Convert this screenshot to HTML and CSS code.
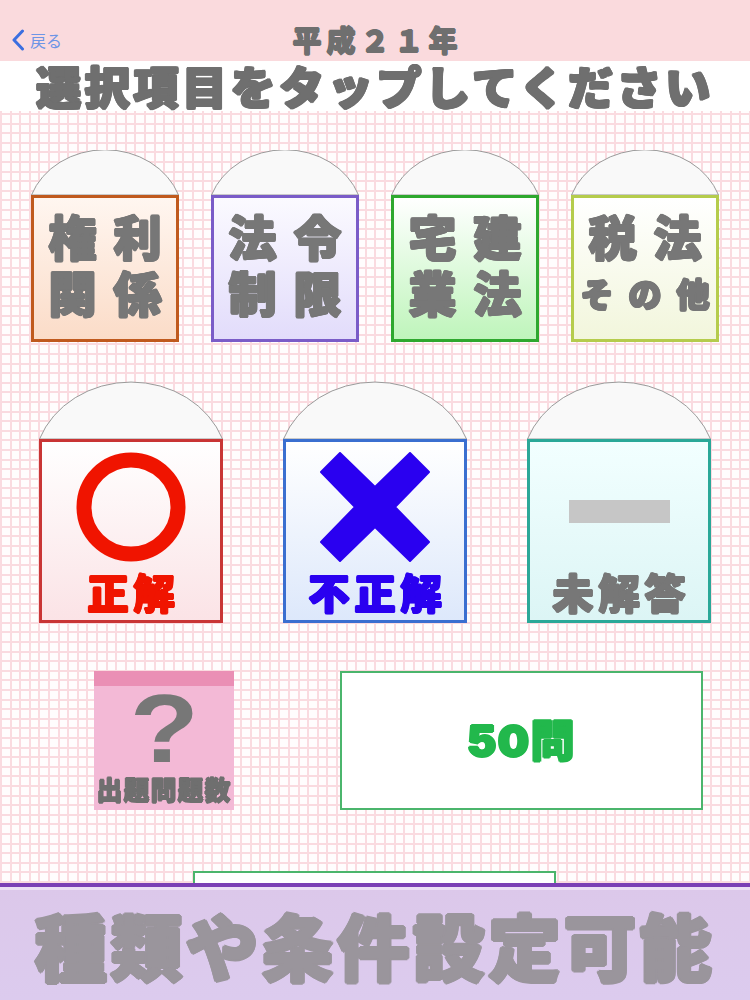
FILE: index.html
```html
<!DOCTYPE html>
<html lang="ja">
<head>
<meta charset="utf-8">
<title>平成21年</title>
<link rel="stylesheet" href="styles.css">
</head>
<body>
<div class="page">
  <header class="topbar">
    <a class="back">
      <svg class="chev" viewBox="0 0 14 22" width="14" height="22"><path d="M11.5 2 L3 11 L11.5 20" fill="none" stroke="#3b6fe0" stroke-width="3" stroke-linecap="round" stroke-linejoin="round"/></svg>
      <span>戻る</span>
    </a>
    <div class="year">平成２１年</div>
  </header>
  <div class="title"><span class="title-text">選択項目をタップしてください</span></div>
  <main class="board">
    <div class="row row-subject">
      <div class="tab tab-s">
        <svg class="dome" viewBox="0 0 148 45" width="148" height="45"><path d="M0.5 45 A78 68 0 0 1 147.5 45 Z"/></svg>
        <div class="box box-s c-orange"><div>権利</div><div>関係</div></div>
      </div>
      <div class="tab tab-s">
        <svg class="dome" viewBox="0 0 148 45" width="148" height="45"><path d="M0.5 45 A78 68 0 0 1 147.5 45 Z"/></svg>
        <div class="box box-s c-purple"><div>法令</div><div>制限</div></div>
      </div>
      <div class="tab tab-s">
        <svg class="dome" viewBox="0 0 148 45" width="148" height="45"><path d="M0.5 45 A78 68 0 0 1 147.5 45 Z"/></svg>
        <div class="box box-s c-green"><div>宅建</div><div>業法</div></div>
      </div>
      <div class="tab tab-s">
        <svg class="dome" viewBox="0 0 148 45" width="148" height="45"><path d="M0.5 45 A78 68 0 0 1 147.5 45 Z"/></svg>
        <div class="box box-s c-olive"><div>税法</div><div class="small">その他</div></div>
      </div>
    </div>
    <div class="row row-answer">
      <div class="tab tab-l">
        <svg class="dome" viewBox="0 0 184 58" width="184" height="58"><path d="M0.5 58 A97.5 87 0 0 1 183.5 58 Z"/></svg>
        <div class="box box-l c-red">
          <div class="mark"><svg viewBox="0 0 110 110" width="110" height="110"><circle cx="55" cy="55" r="47" fill="none" stroke="#f01400" stroke-width="15"/></svg></div>
          <div class="label t-red">正解</div>
        </div>
      </div>
      <div class="tab tab-l">
        <svg class="dome" viewBox="0 0 184 58" width="184" height="58"><path d="M0.5 58 A97.5 87 0 0 1 183.5 58 Z"/></svg>
        <div class="box box-l c-blue">
          <div class="mark"><svg viewBox="0 0 110 110" width="110" height="110"><path d="M1 20 L20 1 L55 35 L90 1 L109 20 L75 55 L109 90 L90 109 L55 75 L20 109 L1 90 L35 55 Z" fill="#2a00f0" stroke="#2a00f0" stroke-width="2" stroke-linejoin="round"/></svg></div>
          <div class="label t-blue">不正解</div>
        </div>
      </div>
      <div class="tab tab-l">
        <svg class="dome" viewBox="0 0 184 58" width="184" height="58"><path d="M0.5 58 A97.5 87 0 0 1 183.5 58 Z"/></svg>
        <div class="box box-l c-teal">
          <div class="mark"><span class="dash"></span></div>
          <div class="label">未解答</div>
        </div>
      </div>
    </div>
    <div class="row row-count">
      <div class="note">
        <div class="note-band"></div>
        <div class="note-q">?</div>
        <div class="note-cap">出題問題数</div>
      </div>
      <div class="count">50問</div>
    </div>
    <div class="next"></div>
  </main>
  <footer class="promo"><span>種類や条件設定可能</span></footer>
</div>
</body>
</html>
```
FILE: styles.css
```css
* { box-sizing: border-box; }
html, body { margin: 0; padding: 0; }
body {
  width: 750px;
  height: 1000px;
  overflow: hidden;
  background: #fff;
  font-family: "Noto Sans CJK JP", "Noto Sans", sans-serif;
}
.page {
  display: flex;
  flex-direction: column;
  width: 750px;
  height: 1000px;
  filter: blur(0.5px);
}

.topbar {
  height: 61px;
  background: #fadadd;
  display: flex;
  align-items: flex-end;
  justify-content: center;
  position: relative;
}
.back {
  position: absolute;
  left: 11px;
  top: 29px;
  display: flex;
  align-items: center;
  gap: 5px;
  color: #6d95e6;
  font-size: 16px;
  line-height: 22px;
}
.year {
  height: 42px;
  line-height: 40px;
  font-size: 29px;
  font-weight: 900;
  letter-spacing: 5px;
  padding-left: 5px;
  color: #6f6f6f;
  text-shadow: 0.8px 0 #6f6f6f, -0.8px 0 #6f6f6f, 0 0.8px #6f6f6f, 0 -0.8px #6f6f6f;
}

.title {
  height: 50px;
  background: #fff;
  display: flex;
  align-items: center;
  justify-content: center;
}
.title-text {
  font-size: 45px;
  line-height: 50px;
  font-weight: 900;
  letter-spacing: 3.6px;
  color: #6f6f6f;
  text-shadow: 1.4px 0 #6f6f6f, -1.4px 0 #6f6f6f, 0 1.4px #6f6f6f, 0 -1.4px #6f6f6f,
    1px 1px #6f6f6f, -1px 1px #6f6f6f, 1px -1px #6f6f6f, -1px -1px #6f6f6f;
  white-space: nowrap;
}

.board {
  height: 772px;
  overflow: hidden;
  padding-top: 39px;
  display: flex;
  flex-direction: column;
  background-color: #fffdfd;
  background-image:
    repeating-linear-gradient(90deg, #fadbe0 0, #fadbe0 2px, transparent 2px, transparent 9.6px),
    repeating-linear-gradient(0deg, #fadbe0 0, #fadbe0 2px, transparent 2px, transparent 9.6px);
}
.row { display: flex; flex: none; }
.row-subject { justify-content: center; gap: 32px; }
.row-answer { justify-content: center; gap: 60px; margin-top: 39px; }
.row-count { margin-top: 48px; padding-left: 94px; gap: 106px; }

.tab { display: flex; flex-direction: column; flex: none; }
.tab-s { width: 148px; }
.tab-l { width: 184px; }
.dome { display: block; flex: none; fill: #f9f9f9; stroke: #9a9a9a; stroke-width: 1; }

.box {
  border: 3px solid;
  color: #777;
  font-weight: 900;
  text-align: center;
  text-shadow: 1.2px 0 currentColor, -1.2px 0 currentColor, 0 1.2px currentColor, 0 -1.2px currentColor,
    0.8px 0.8px currentColor, -0.8px 0.8px currentColor, 0.8px -0.8px currentColor, -0.8px -0.8px currentColor;
}
.box-s {
  height: 147px;
  padding-top: 9px;
  font-size: 48px;
  line-height: 56px;
  letter-spacing: 17px;
  padding-left: 17px;
  white-space: nowrap;
  display: flex;
  flex-direction: column;
  align-items: center;
}
.small {
  font-size: 33px;
  letter-spacing: 15px;
  margin-left: -17px;
  padding-left: 15px;
  padding-top: 2px;
}
.box-l {
  height: 184px;
  padding-top: 10px;
  display: flex;
  flex-direction: column;
  align-items: center;
}
.mark {
  height: 110px;
  display: flex;
  align-items: center;
  justify-content: center;
}
.mark svg { display: block; }
.dash { display: block; width: 101px; height: 23px; margin-top: 8px; background: #c6c6c6; }
.label {
  margin-top: 7px;
  font-size: 41px;
  line-height: 44px;
  letter-spacing: 5px;
  padding-left: 5px;
  white-space: nowrap;
}
.t-red { color: #f01400; }
.t-blue { color: #2a00f0; }

.c-orange { border-color: #c05a1e; background: linear-gradient(#fff6f0, #fbdcc8); }
.c-purple { border-color: #7a5cc8; background: linear-gradient(#fbfaff, #e2dcfb); }
.c-green { border-color: #2ea82e; background: linear-gradient(#fff, #bff5bb); }
.c-olive { border-color: #b5cc4c; background: linear-gradient(#fff, #f2f6dc); }
.c-red { border-color: #c93535; background: linear-gradient(#fff, #fbe3e6); }
.c-blue { border-color: #3a6fd0; background: linear-gradient(#fff, #dde8fb); }
.c-teal { border-color: #2aa898; background: linear-gradient(#f2ffff, #dcf5f5); }

.note {
  width: 140px;
  height: 139px;
  flex: none;
  background: #f3b9d6;
  display: flex;
  flex-direction: column;
  align-items: center;
  color: #6f6f6f;
}
.note-band { width: 100%; height: 15px; background: #ea8fb5; flex: none; }
.note-q {
  height: 87px;
  font-family: "Liberation Sans", sans-serif;
  font-size: 96px;
  line-height: 86px;
  font-weight: 700;
  color: #777;
  transform: scaleX(1.18);
}
.note-cap {
  font-size: 26px;
  line-height: 32px;
  font-weight: 900;
  letter-spacing: 1px;
  white-space: nowrap;
  text-shadow: 0.7px 0 #6f6f6f, -0.7px 0 #6f6f6f, 0 0.7px #6f6f6f, 0 -0.7px #6f6f6f;
}
.count {
  width: 363px;
  height: 139px;
  flex: none;
  background: #fff;
  border: 2px solid #4bb56c;
  padding-bottom: 6px;
  display: flex;
  align-items: center;
  justify-content: center;
  color: #22b84c;
  font-family: Inter, "Noto Sans CJK JP", sans-serif;
  font-size: 44px;
  font-weight: 900;
  letter-spacing: 1.5px;
  text-shadow: 1.2px 0 #22b84c, -1.2px 0 #22b84c, 0 1.2px #22b84c, 0 -1.2px #22b84c;
}
.next {
  flex: none;
  width: 363px;
  height: 60px;
  margin: 61px 0 0 193px;
  background: #fff;
  border: 2px solid #4bb56c;
}

.promo {
  height: 117px;
  border-top: 4px solid #7b3fb5;
  background: linear-gradient(#dcc8ea, #dccbee);
  box-shadow: inset 0 3px 0 #ecdff5;
  display: flex;
  align-items: center;
  justify-content: center;
}
.promo span {
  font-size: 72px;
  line-height: 100px;
  font-weight: 900;
  letter-spacing: 3.6px;
  color: #9a959c;
  text-shadow: 2px 0 #9a959c, -2px 0 #9a959c, 0 2px #9a959c, 0 -2px #9a959c,
    1.4px 1.4px #9a959c, -1.4px 1.4px #9a959c, 1.4px -1.4px #9a959c, -1.4px -1.4px #9a959c;
  white-space: nowrap;
}
```
